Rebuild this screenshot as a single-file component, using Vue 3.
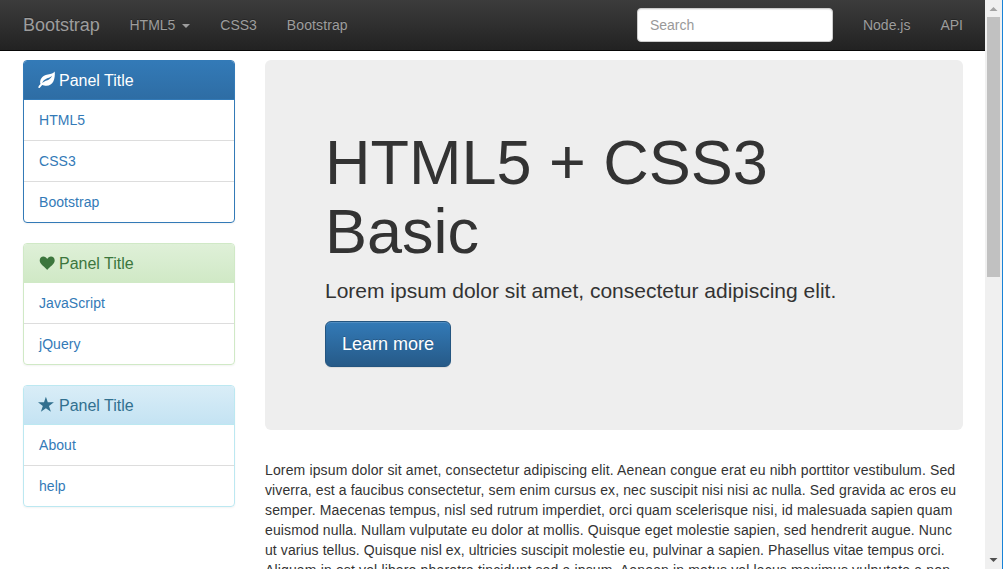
<script setup>
const panels = [
  { kind: 'primary', icon: 'leaf', items: ['HTML5', 'CSS3', 'Bootstrap'] },
  { kind: 'success', icon: 'heart', items: ['JavaScript', 'jQuery'] },
  { kind: 'info', icon: 'star', items: ['About', 'help'] },
]
const lines = [
  { tracking: 0.143, text: 'Lorem ipsum dolor sit amet, consectetur adipiscing elit. Aenean congue erat eu nibh porttitor vestibulum. Sed' },
  { tracking: 0.113, text: 'viverra, est a faucibus consectetur, sem enim cursus ex, nec suscipit nisi nisi ac nulla. Sed gravida ac eros eu' },
  { tracking: 0.138, text: 'semper. Maecenas tempus, nisl sed rutrum imperdiet, orci quam scelerisque nisi, id malesuada sapien quam' },
  { tracking: 0.13, text: 'euismod nulla. Nullam vulputate eu dolor at mollis. Quisque eget molestie sapien, sed hendrerit augue. Nunc' },
  { tracking: 0.085, text: 'ut varius tellus. Quisque nisl ex, ultricies suscipit molestie eu, pulvinar a sapien. Phasellus vitae tempus orci.' },
  { tracking: 0.148, text: 'Aliquam in est vel libero pharetra tincidunt sed a ipsum. Aenean in metus vel lacus maximus vulputate a non' },
]
</script>

<template>
  <div class="window">
    <div class="page">
      <nav class="navbar">
        <div class="bar">
          <a class="brand">Bootstrap</a>
          <a class="link">HTML5 <span class="caret"></span></a>
          <a class="link">CSS3</a>
          <a class="link wide">Bootstrap</a>
          <input class="search" type="text" placeholder="Search" />
          <a class="link">Node.js</a>
          <a class="link">API</a>
        </div>
      </nav>

      <div class="container">
        <aside class="side">
          <section v-for="p in panels" :key="p.kind" class="panel" :class="p.kind">
            <h3 class="heading">
              <svg class="icon" viewBox="0 0 18 18">
                <path v-if="p.icon === 'leaf'" fill-rule="evenodd" d="M16.700.5C17.500 8 15 14.600 8.500 14.800C6.700 14.800 5.200 14.300 4.200 13.900L1.600 16.900Q.5 17.300.2 16.300Q.9 14.500 2.500 13.100C1.200 8.700 4.200 4.900 8.700 3.800C12.200 2.900 14.700 2.900 16.700.5ZM13.900 4.800C12.200 6.900 9.700 6.900 7.500 8.200C5.700 9.200 4.500 10.800 4.100 12.100C6.700 9.400 9.200 9.500 11 8.400C12.600 7.400 13.600 6.300 13.900 4.800Z" />
                <path v-else-if="p.icon === 'heart'" d="M9.200 16C7.500 13.500 1.700 10.500 1.700 6.600C1.700 4.200 3.400 2.600 5.400 2.600C7 2.600 8.400 3.500 9.200 5C10 3.500 11.400 2.600 13 2.600C15 2.600 16.700 4.200 16.700 6.600C16.700 10.500 10.900 13.500 9.200 16Z" />
                <path v-else d="M7.900.8L9.800 6.300H15.900L11 9.900L12.900 15.800L7.900 12.200L2.900 15.800L4.800 9.900L0 6.300H6Z" />
              </svg>
              <span class="title">Panel Title</span>
            </h3>
            <a v-for="item in p.items" :key="item" class="item">{{ item }}</a>
          </section>
        </aside>

        <main class="main">
          <div class="jumbotron">
            <h1>HTML5 + CSS3<br />Basic</h1>
            <p>Lorem ipsum dolor sit amet, consectetur adipiscing elit.</p>
            <a class="btn">Learn more</a>
          </div>
          <div class="copy">
            <div v-for="(line, i) in lines" :key="i" :style="{ letterSpacing: line.tracking + 'px' }">{{ line.text }}</div>
          </div>
        </main>
      </div>
    </div>

    <div class="scrollbar">
      <svg width="17" height="17" viewBox="0 0 17 17"><path fill="#a3a3a3" d="M4.500 11L8.500 7L12.500 11Z" /></svg>
      <div class="thumb"></div>
      <svg class="down" width="17" height="17" viewBox="0 0 17 17"><path fill="#505050" d="M4.500 6L8.500 10L12.500 6Z" /></svg>
    </div>
  </div>
</template>

<style>
body {
  margin: 0;
  overflow: hidden;
}
</style>

<style scoped>
* {
  box-sizing: border-box;
}
.window {
  display: flex;
  width: 1003px;
  height: 569px;
  overflow: hidden;
  background: #fff;
  color: #333;
  font: 14px/20px "Liberation Sans", Arial, sans-serif;
}
.page {
  width: 985px;
  overflow: hidden;
}
.navbar {
  height: 51px;
  border-bottom: 1px solid #080808;
  background: linear-gradient(#3c3c3c, #222);
}
.bar {
  display: flex;
  width: 970px;
  margin: 0 7px 0 8px;
  color: #9d9d9d;
  text-shadow: 0 -1px 0 rgba(0, 0, 0, 0.25);
}
.brand {
  padding: 15px;
  margin-right: -0.3px;
  font-size: 18px;
  letter-spacing: -0.03px;
}
.link {
  padding: 15px;
}
.wide {
  letter-spacing: 0.1px;
}
.caret {
  display: inline-block;
  margin-left: 3px;
  vertical-align: middle;
  border-top: 4px solid;
  border-right: 4px solid transparent;
  border-left: 4px solid transparent;
}
.search {
  width: 196px;
  height: 34px;
  margin: 8px 15px 0 auto;
  padding: 6px 12px;
  border: 1px solid #ccc;
  border-radius: 4px;
  background: #fff;
  box-shadow: inset 0 1px 1px rgba(0, 0, 0, 0.075);
  font: inherit;
}
.search::placeholder {
  color: #999;
  opacity: 1;
}
.container {
  display: flex;
  gap: 30px;
  width: 970px;
  margin: 9px 7px 0 8px;
  padding: 0 15px;
}
.side {
  width: 212px;
}
.panel {
  margin-bottom: 20px;
  border: 1px solid;
  border-radius: 4px;
  box-shadow: 0 1px 2px rgba(0, 0, 0, 0.05);
}
.heading {
  display: flex;
  align-items: center;
  gap: 3px;
  height: 39px;
  margin: 0;
  padding: 0 15px;
  border-bottom: 1px solid;
  border-radius: 3px 3px 0 0;
  font-size: 16px;
  font-weight: 400;
  line-height: 18px;
}
.title {
  padding-top: 2px;
}
.icon {
  width: 18px;
  height: 18px;
  margin: -1px 0 0 -1px;
  fill: currentColor;
}
.primary,
.primary .heading {
  border-color: #337ab7;
}
.primary .heading {
  color: #fff;
  background: linear-gradient(#337ab7, #2e6da4);
}
.success,
.success .heading {
  border-color: #d0e9c6;
}
.success .heading {
  color: #3c763d;
  background: linear-gradient(#dff0d8, #d0e9c6);
}
.info,
.info .heading {
  border-color: #bce8f1;
}
.info .heading {
  color: #31708f;
  background: linear-gradient(#d9edf7, #c4e3f3);
}
.item {
  display: block;
  padding: 10px 15px;
  color: #337ab7;
  letter-spacing: 0.06px;
}
.item + .item {
  border-top: 1px solid #ddd;
}
.main {
  width: 698px;
}
.jumbotron {
  height: 370px;
  margin-bottom: 30px;
  padding: 68px 60px 48px;
  border-radius: 6px;
  background: #eee;
}
.jumbotron h1 {
  margin: 0 0 9px;
  font-size: 63px;
  font-weight: 400;
  line-height: 1.1;
}
.jumbotron p {
  margin: 0 0 15px;
  font-size: 21px;
  line-height: 30px;
}
.btn {
  display: inline-block;
  height: 46px;
  padding: 10px 16px;
  border: 1px solid #245580;
  border-radius: 6px;
  color: #fff;
  background: linear-gradient(#337ab7, #265a88);
  box-shadow: inset 0 1px 0 rgba(255, 255, 255, 0.15), 0 1px 1px rgba(0, 0, 0, 0.075);
  font-size: 18px;
  line-height: 24px;
  text-shadow: 0 -1px 0 rgba(0, 0, 0, 0.2);
}
.copy {
  white-space: nowrap;
}
.scrollbar {
  display: flex;
  flex-direction: column;
  width: 18px;
  background: #f0f0f0;
  border-right: 1px solid #1883d7;
}
.thumb {
  width: 13px;
  height: 260px;
  margin-left: 2px;
  background: #c1c1c1;
}
.down {
  margin-top: auto;
}
</style>
